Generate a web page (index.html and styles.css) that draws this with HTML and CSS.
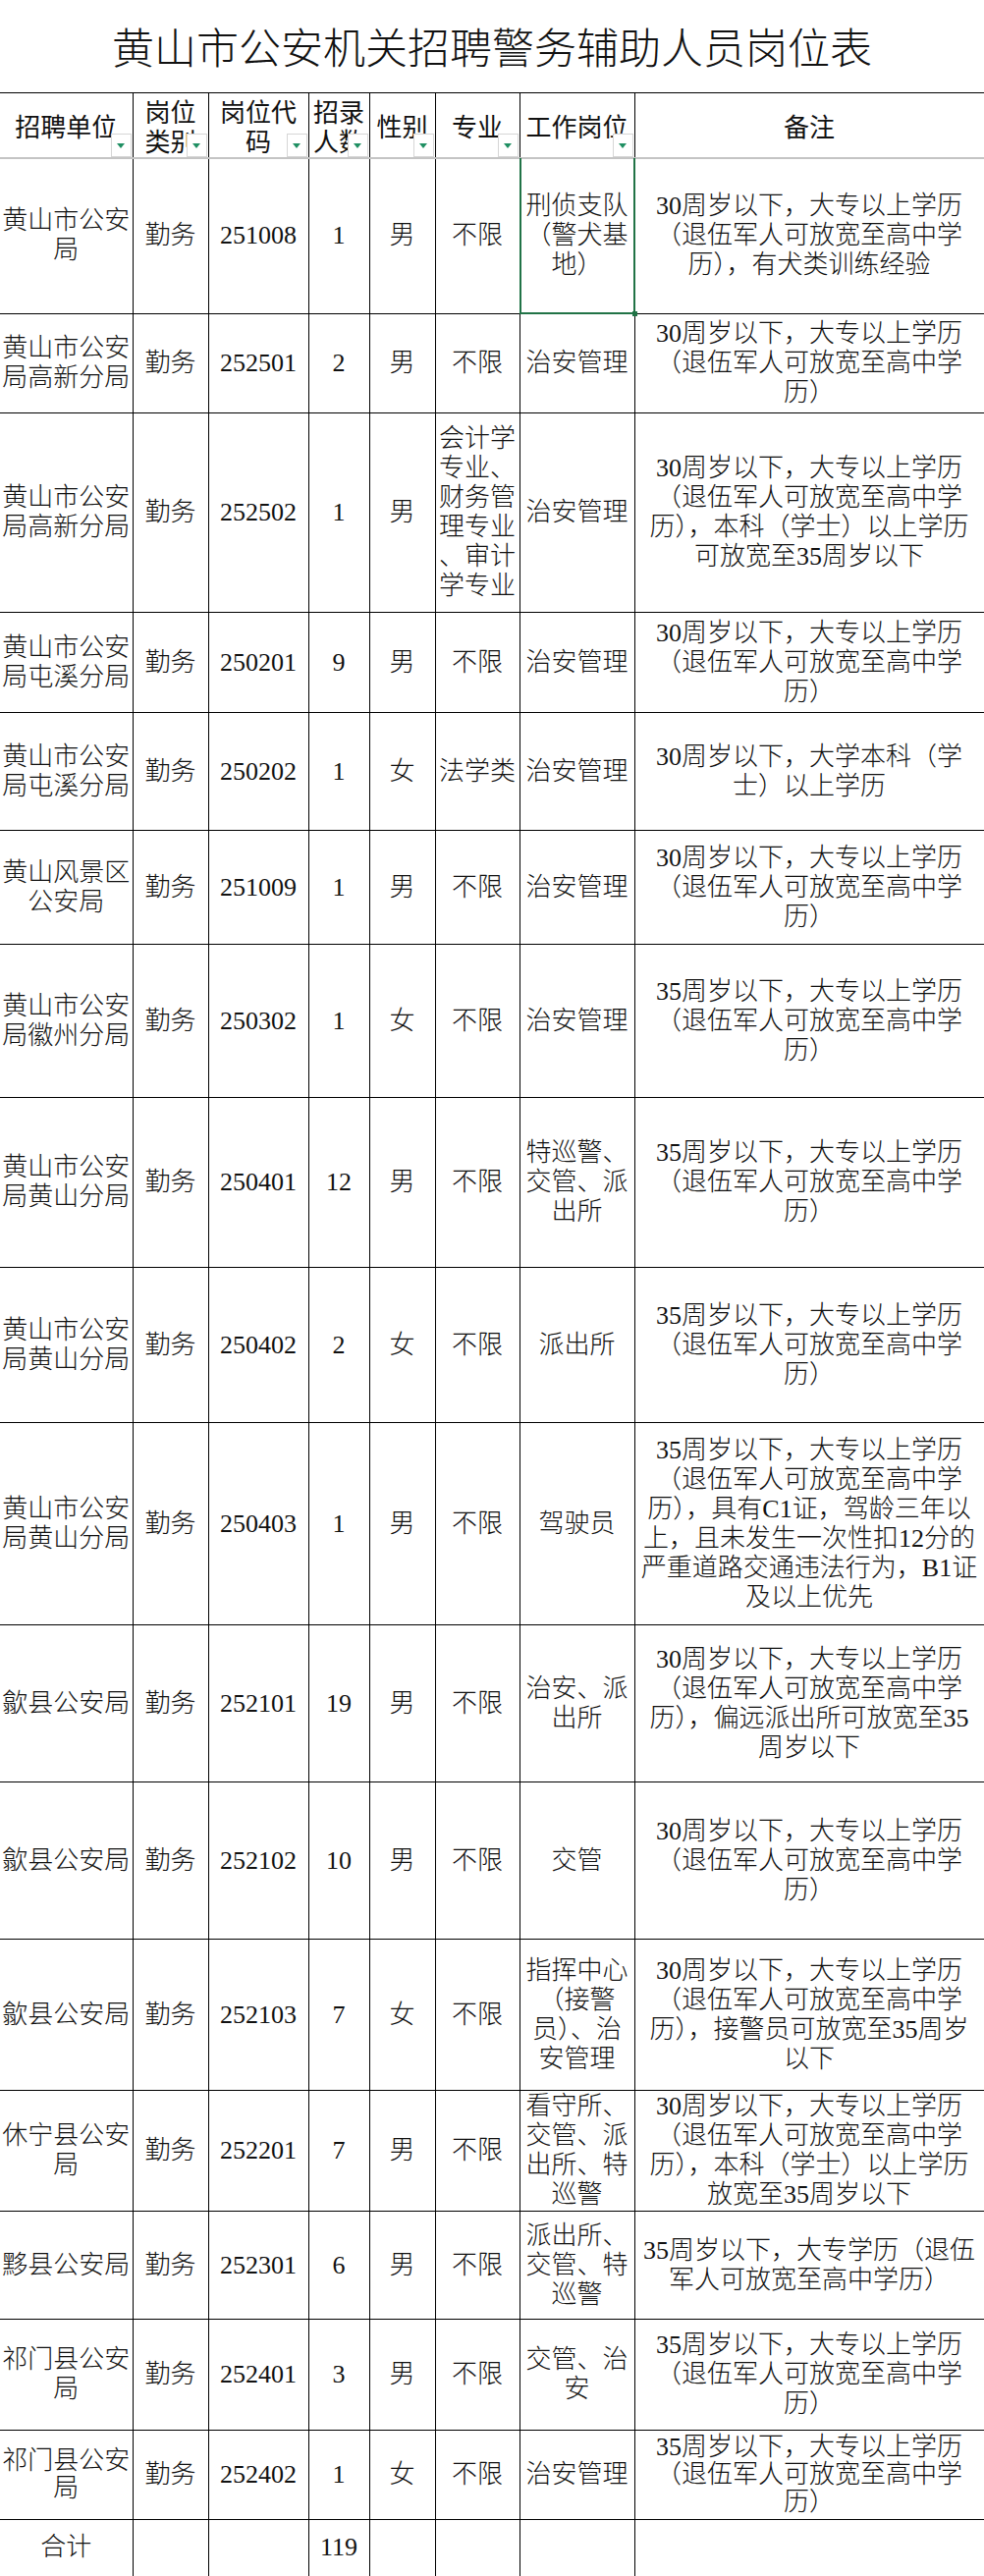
FILE: index.html
```html
<!DOCTYPE html>
<html lang="zh-CN">
<head>
<meta charset="utf-8">
<title>黄山市公安机关招聘警务辅助人员岗位表</title>
<link rel="stylesheet" href="styles.css">
</head>
<body>
<div class="sheet">
<h1 class="title">黄山市公安机关招聘警务辅助人员岗位表</h1>
<table class="grid">
<colgroup>
<col class="c1"><col class="c2"><col class="c3"><col class="c4"><col class="c5"><col class="c6"><col class="c7"><col class="c8">
</colgroup>
<thead>
<tr class="hd">
<th>招聘单位<span class="flt"></span></th>
<th>岗位<br>类别<span class="flt"></span></th>
<th>岗位代<br>码<span class="flt"></span></th>
<th>招录<br>人数<span class="flt"></span></th>
<th>性别<span class="flt"></span></th>
<th>专业<span class="flt"></span></th>
<th>工作岗位<span class="flt"></span></th>
<th>备注</th>
</tr>
</thead>
<tbody>
<tr class="h159">
<td>黄山市公安<br>局</td><td>勤务</td><td>251008</td><td>1</td><td>男</td><td>不限</td>
<td class="sel">刑侦支队<br>（警犬基<br>地）</td>
<td>30周岁以下，大专以上学历<br>（退伍军人可放宽至高中学<br>历），有犬类训练经验</td>
</tr>
<tr class="h101">
<td>黄山市公安<br>局高新分局</td><td>勤务</td><td>252501</td><td>2</td><td>男</td><td>不限</td><td>治安管理</td>
<td>30周岁以下，大专以上学历<br>（退伍军人可放宽至高中学<br>历）</td>
</tr>
<tr class="h203">
<td>黄山市公安<br>局高新分局</td><td>勤务</td><td>252502</td><td>1</td><td>男</td>
<td>会计学<br>专业、<br>财务管<br>理专业<br>、审计<br>学专业</td>
<td>治安管理</td>
<td>30周岁以下，大专以上学历<br>（退伍军人可放宽至高中学<br>历），本科（学士）以上学历<br>可放宽至35周岁以下</td>
</tr>
<tr class="h102">
<td>黄山市公安<br>局屯溪分局</td><td>勤务</td><td>250201</td><td>9</td><td>男</td><td>不限</td><td>治安管理</td>
<td>30周岁以下，大专以上学历<br>（退伍军人可放宽至高中学<br>历）</td>
</tr>
<tr class="h120">
<td>黄山市公安<br>局屯溪分局</td><td>勤务</td><td>250202</td><td>1</td><td>女</td><td>法学类</td><td>治安管理</td>
<td>30周岁以下，大学本科（学<br>士）以上学历</td>
</tr>
<tr class="h116">
<td>黄山风景区<br>公安局</td><td>勤务</td><td>251009</td><td>1</td><td>男</td><td>不限</td><td>治安管理</td>
<td>30周岁以下，大专以上学历<br>（退伍军人可放宽至高中学<br>历）</td>
</tr>
<tr class="h156">
<td>黄山市公安<br>局徽州分局</td><td>勤务</td><td>250302</td><td>1</td><td>女</td><td>不限</td><td>治安管理</td>
<td>35周岁以下，大专以上学历<br>（退伍军人可放宽至高中学<br>历）</td>
</tr>
<tr class="h173">
<td>黄山市公安<br>局黄山分局</td><td>勤务</td><td>250401</td><td>12</td><td>男</td><td>不限</td>
<td>特巡警、<br>交管、派<br>出所</td>
<td>35周岁以下，大专以上学历<br>（退伍军人可放宽至高中学<br>历）</td>
</tr>
<tr class="h158">
<td>黄山市公安<br>局黄山分局</td><td>勤务</td><td>250402</td><td>2</td><td>女</td><td>不限</td><td>派出所</td>
<td>35周岁以下，大专以上学历<br>（退伍军人可放宽至高中学<br>历）</td>
</tr>
<tr class="h206">
<td>黄山市公安<br>局黄山分局</td><td>勤务</td><td>250403</td><td>1</td><td>男</td><td>不限</td><td>驾驶员</td>
<td>35周岁以下，大专以上学历<br>（退伍军人可放宽至高中学<br>历），具有C1证，驾龄三年以<br>上，且未发生一次性扣12分的<br>严重道路交通违法行为，B1证<br>及以上优先</td>
</tr>
<tr class="h160">
<td>歙县公安局</td><td>勤务</td><td>252101</td><td>19</td><td>男</td><td>不限</td>
<td>治安、派<br>出所</td>
<td>30周岁以下，大专以上学历<br>（退伍军人可放宽至高中学<br>历），偏远派出所可放宽至35<br>周岁以下</td>
</tr>
<tr class="h160">
<td>歙县公安局</td><td>勤务</td><td>252102</td><td>10</td><td>男</td><td>不限</td><td>交管</td>
<td>30周岁以下，大专以上学历<br>（退伍军人可放宽至高中学<br>历）</td>
</tr>
<tr class="h154">
<td>歙县公安局</td><td>勤务</td><td>252103</td><td>7</td><td>女</td><td>不限</td>
<td>指挥中心<br>（接警<br>员）、治<br>安管理</td>
<td>30周岁以下，大专以上学历<br>（退伍军人可放宽至高中学<br>历），接警员可放宽至35周岁<br>以下</td>
</tr>
<tr class="h123">
<td>休宁县公安<br>局</td><td>勤务</td><td>252201</td><td>7</td><td>男</td><td>不限</td>
<td>看守所、<br>交管、派<br>出所、特<br>巡警</td>
<td>30周岁以下，大专以上学历<br>（退伍军人可放宽至高中学<br>历），本科（学士）以上学历<br>放宽至35周岁以下</td>
</tr>
<tr class="h110">
<td>黟县公安局</td><td>勤务</td><td>252301</td><td>6</td><td>男</td><td>不限</td>
<td>派出所、<br>交管、特<br>巡警</td>
<td>35周岁以下，大专学历（退伍<br>军人可放宽至高中学历）</td>
</tr>
<tr class="h113">
<td>祁门县公安<br>局</td><td>勤务</td><td>252401</td><td>3</td><td>男</td><td>不限</td>
<td>交管、治<br>安</td>
<td>35周岁以下，大专以上学历<br>（退伍军人可放宽至高中学<br>历）</td>
</tr>
<tr class="h91 tight">
<td>祁门县公安<br>局</td><td>勤务</td><td>252402</td><td>1</td><td>女</td><td>不限</td><td>治安管理</td>
<td>35周岁以下，大专以上学历<br>（退伍军人可放宽至高中学<br>历）</td>
</tr>
<tr class="h57 tot">
<td>合计</td><td></td><td></td><td>119</td><td></td><td></td><td></td><td></td>
</tr>
</tbody>
</table>
</div>
</body>
</html>
```

FILE: styles.css
```css
html, body {
  margin: 0;
  padding: 0;
  background: #fff;
}
body {
  width: 1002px;
  font-family: "Liberation Serif", "Noto Sans CJK SC", serif;
  color: #111;
}
.sheet {
  width: 1002px;
  height: 2623px;
  overflow: hidden;
}
.title {
  margin: 0;
  height: 94px;
  display: flex;
  align-items: center;
  justify-content: center;
  font-family: "Noto Sans CJK SC", sans-serif;
  font-weight: 300;
  font-size: 43px;
  color: #111;
  padding-bottom: 2px;
  box-sizing: border-box;
}
.grid {
  border-collapse: collapse;
  table-layout: fixed;
  width: 1002px;
}
.c1 { width: 135px; }
.c2 { width: 77px; }
.c3 { width: 102px; }
.c4 { width: 62px; }
.c5 { width: 67px; }
.c6 { width: 86px; }
.c7 { width: 117px; }
.c8 { width: 356px; }

.grid td, .grid th {
  border: 1px solid #000;
  padding: 0;
  text-align: center;
  vertical-align: middle;
  font-size: 26px;
  line-height: 30px;
  white-space: nowrap;
  font-weight: 300;
  overflow: hidden;
}
.grid tr > :first-child {
  border-left: none;
}
.grid th {
  font-family: "Noto Sans CJK SC", sans-serif;
  font-weight: 400;
  line-height: 30px;
  position: relative;
  border-bottom: 2px solid #c4c4c4;
  height: 66px;
  padding-top: 2px;
  box-sizing: border-box;
}
.flt {
  position: absolute;
  right: 1px;
  bottom: 0;
  width: 21px;
  height: 24px;
  border: 1px solid #d6d6d6;
  background: #fff;
  box-sizing: border-box;
}
.flt::after {
  content: "";
  position: absolute;
  left: 50%;
  top: 50%;
  margin-left: -4.5px;
  margin-top: -2px;
  border-left: 4.5px solid transparent;
  border-right: 4.5px solid transparent;
  border-top: 5px solid #1f8f62;
}
.grid td.sel {
  position: relative;
  overflow: visible;
}
.grid td.sel::after {
  content: "";
  position: absolute;
  left: -1px;
  right: -1px;
  top: -1px;
  bottom: -1px;
  border: 2px solid #217346;
  border-top: none;
}
.grid td.sel::before {
  content: "";
  position: absolute;
  right: -3px;
  bottom: -3px;
  width: 5px;
  height: 5px;
  background: #217346;
  z-index: 1;
}
.grid .tight td {
  line-height: 28px;
}
.tot td {
  border-bottom: none;
}
.h57 { height: 57px; }
.h91 { height: 91px; }
.h101 { height: 101px; }
.h102 { height: 102px; }
.h110 { height: 110px; }
.h113 { height: 113px; }
.h116 { height: 116px; }
.h120 { height: 120px; }
.h123 { height: 123px; }
.h154 { height: 154px; }
.h156 { height: 156px; }
.h158 { height: 158px; }
.h159 { height: 159px; }
.h160 { height: 160px; }
.h173 { height: 173px; }
.h203 { height: 203px; }
.h206 { height: 206px; }
```
